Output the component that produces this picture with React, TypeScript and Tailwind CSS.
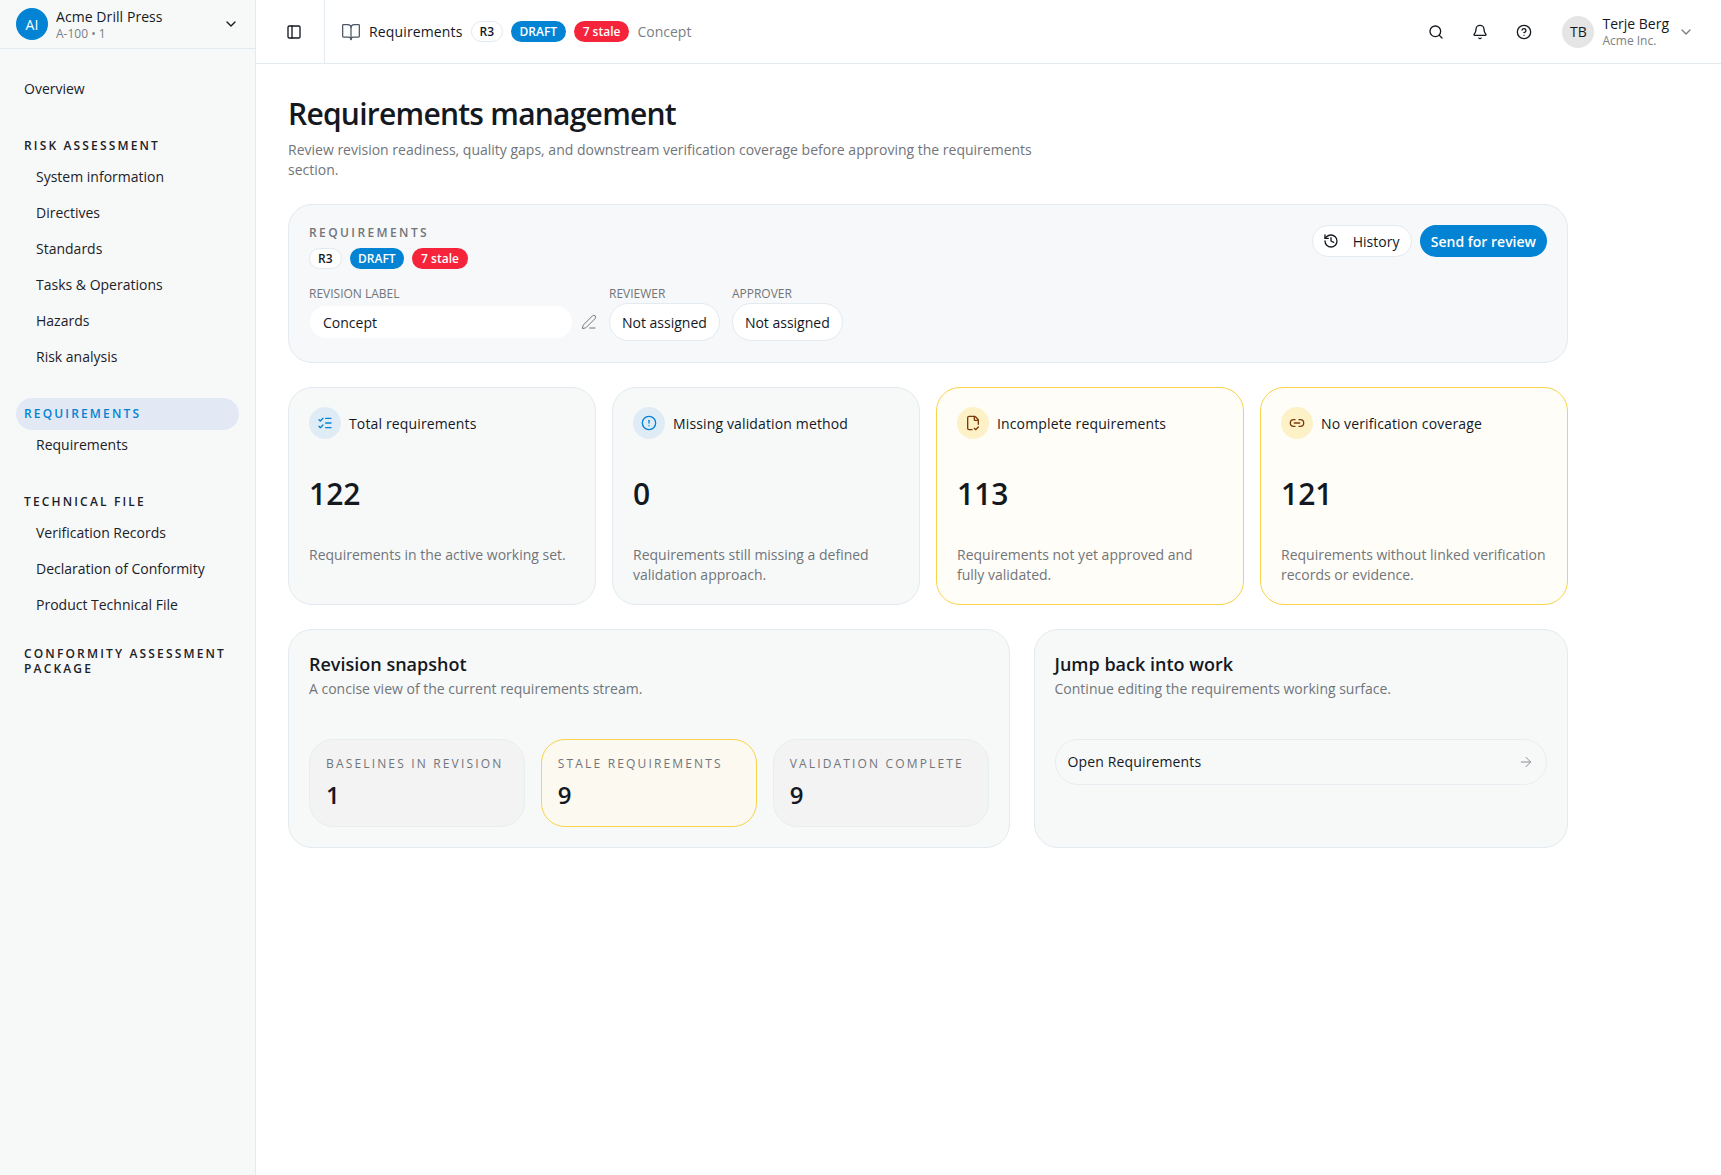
import React from 'react';
import {
  ArrowRight,
  Bell,
  BookOpen,
  ChevronDown,
  CircleAlert,
  CircleHelp,
  FileCheck2,
  History,
  Link2,
  ListChecks,
  PanelLeft,
  PenLine,
  Search,
} from 'lucide-react';

const navHeading = 'px-2 text-[12px] leading-[15px] font-semibold tracking-[0.18em] text-[#1c2128] uppercase';

const Badges = () => (
  <div className="flex items-center gap-2">
    <span className="flex h-[21px] items-center rounded-full border border-[#e2e8f0] bg-white px-2 text-[12px] font-semibold text-[#14181f]">R3</span>
    <span className="flex h-[21px] items-center rounded-full bg-[#0283d4] px-[8.5px] text-[12px] font-semibold text-white">DRAFT</span>
    <span className="flex h-[21px] items-center rounded-full bg-[#f6243a] px-[9px] text-[12px] font-semibold text-white">7 stale</span>
  </div>
);

const stats = [
  { title: 'Total requirements', value: '122', desc: 'Requirements in the active working set.', Icon: ListChecks, warn: false },
  { title: 'Missing validation method', value: '0', desc: 'Requirements still missing a defined validation approach.', Icon: CircleAlert, warn: false },
  { title: 'Incomplete requirements', value: '113', desc: 'Requirements not yet approved and fully validated.', Icon: FileCheck2, warn: true },
  { title: 'No verification coverage', value: '121', desc: 'Requirements without linked verification records or evidence.', Icon: Link2, warn: true },
];

const snapshot = [
  { label: 'Baselines in revision', value: '1', warn: false },
  { label: 'Stale requirements', value: '9', warn: true },
  { label: 'Validation complete', value: '9', warn: false },
];

export default function App() {
  return (
    <div className="flex min-h-[1175px] bg-white font-['Open_Sans',sans-serif] text-[#14181f]">
      {/* Sidebar */}
      <aside className="w-[256px] shrink-0 border-r border-[#e3eaf0] bg-[#f7f9f9]">
        <div className="flex h-[49px] items-center border-b border-[#e3eaf0] pr-[16px] pl-4">
          <div className="flex size-8 items-center justify-center rounded-full bg-[#0283d4] text-[14px] text-white">AI</div>
          <div className="ml-2 flex-1 pt-[2px]">
            <div className="text-[14px] leading-[18px] font-medium tracking-[0.005em]">Acme Drill Press</div>
            <div className="text-[12px] leading-[16px] text-[#7a7f85]">A-100 • 1</div>
          </div>
          <ChevronDown size={16} strokeWidth={2} />
        </div>
        <div className="px-4 pt-[21px]">
          <div className="flex h-9 items-center pl-2 text-[14px] text-[#1c2128]">Overview</div>
          <div className={navHeading + ' mt-[32px]'}>Risk assessment</div>
          <div className="mt-[5px]">
            {['System information', 'Directives', 'Standards', 'Tasks & Operations', 'Hazards', 'Risk analysis'].map((t) => (
              <div key={t} className="flex h-9 items-center pl-5 text-[14px] text-[#1c2128]">{t}</div>
            ))}
          </div>
          <div className="mt-[24px] flex h-8 items-center rounded-full bg-[#e2e9f5] px-2 text-[12px] font-semibold tracking-[0.18em] text-[#0283d4] uppercase">Requirements</div>
          <div className="-mt-[4px] flex h-9 items-center pl-5 text-[14px] text-[#1c2128]">Requirements</div>
          <div className={navHeading + ' mt-[32px]'}>Technical file</div>
          <div className="mt-[5px]">
            {['Verification Records', 'Declaration of Conformity', 'Product Technical File'].map((t) => (
              <div key={t} className="flex h-9 items-center pl-5 text-[14px] text-[#1c2128]">{t}</div>
            ))}
          </div>
          <div className={navHeading + ' mt-[24px]'}>Conformity assessment package</div>
        </div>
      </aside>

      <div className="min-w-0 flex-1">
        {/* Top bar */}
        <header className="flex h-[64px] items-center border-b border-[#e3eaf0] pr-[27px]">
          <div className="flex h-full w-[69px] items-center border-r border-[#e3eaf0] pl-[30px]">
            <PanelLeft size={16} strokeWidth={2} />
          </div>
          <BookOpen size={20} strokeWidth={1.5} className="ml-[16px] text-[#4b5563]" />
          <span className="ml-2 text-[14px] font-medium tracking-[0.01em]">Requirements</span>
          <div className="ml-2">
            <Badges />
          </div>
          <span className="ml-2 text-[14px] text-[#7a7f85]">Concept</span>
          <div className="flex-1" />
          <Search size={16} strokeWidth={2} />
          <Bell size={16} strokeWidth={2} className="ml-[28px]" />
          <CircleHelp size={16} strokeWidth={2} className="ml-[28px]" />
          <div className="ml-[30px] flex size-8 items-center justify-center rounded-full bg-[#e5e5e5] text-[14px] font-medium">TB</div>
          <div className="ml-2">
            <div className="text-[14px] leading-[18px] font-medium">Terje Berg</div>
            <div className="text-[12px] leading-[16px] text-[#7a7f85]">Acme Inc.</div>
          </div>
          <ChevronDown size={16} strokeWidth={2} className="ml-[9px] text-[#7a7f85]" />
        </header>

        {/* Main */}
        <main className="w-[1344px] px-8 pt-[30px]">
          <h1 className="text-[30px] leading-[40px] font-semibold tracking-[-0.025em]">Requirements management</h1>
          <p className="mt-[6px] w-[768px] text-[14px] leading-[20px] text-[#71757a]">
            Review revision readiness, quality gaps, and downstream verification coverage before approving the requirements section.
          </p>

          <section className="mt-[24px] flex h-[159px] items-start justify-between rounded-[24px] border border-[#e3eaf0] bg-[#f7f8f9] px-5 pt-[20px]">
            <div>
              <div className="text-[12px] leading-[16px] font-semibold tracking-[0.2em] text-[#71757a] uppercase">Requirements</div>
              <div className="mt-[7px]">
                <Badges />
              </div>
              <div className="mt-[17px] flex gap-3">
                <div>
                  <div className="text-[12px] leading-[16px] font-medium text-[#71757a] uppercase">Revision label</div>
                  <div className="mt-[1px] flex h-[38px] items-center">
                    <div className="ml-[1px] flex h-8 w-[262px] items-center rounded-full bg-white pl-[13px] text-[14px]">Concept</div>
                    <PenLine size={16} strokeWidth={1.5} className="ml-[9px] text-[#71757a]" />
                  </div>
                </div>
                <div>
                  <div className="text-[12px] leading-[16px] font-medium text-[#71757a] uppercase">Reviewer</div>
                  <div className="mt-[1px] flex h-[38px] items-center rounded-full border border-[#e3eaf0] bg-white px-3 text-[14px]">Not assigned</div>
                </div>
                <div>
                  <div className="text-[12px] leading-[16px] font-medium text-[#71757a] uppercase">Approver</div>
                  <div className="mt-[1px] flex h-[38px] items-center rounded-full border border-[#e3eaf0] bg-white px-3 text-[14px]">Not assigned</div>
                </div>
              </div>
            </div>
            <div className="flex gap-2">
              <button className="flex h-8 w-[100px] items-center rounded-full border border-[#e3eaf0] bg-white pl-[10px] text-[14px] font-medium">
                <History size={16} strokeWidth={2} />
                <span className="ml-[14px]">History</span>
              </button>
              <button className="flex h-8 items-center rounded-full bg-[#0283d4] px-[11px] text-[14px] font-semibold text-white">Send for review</button>
            </div>
          </section>

          <section className="mt-[24px] grid grid-cols-4 gap-4">
            {stats.map(({ title, value, desc, Icon, warn }) => (
              <div
                key={title}
                className={
                  warn
                    ? 'h-[218px] rounded-[24px] border border-[#f9d34c] bg-[#fffdf7] px-5 pt-[19px]'
                    : 'h-[218px] rounded-[24px] border border-[#e3eaf0] bg-[#f7f9f9] px-5 pt-[19px]'
                }
              >
                <div className="flex items-center gap-2">
                  <div className={warn ? 'flex size-8 items-center justify-center rounded-full bg-[#fdf1c7] text-[#7c3a0a]' : 'flex size-8 items-center justify-center rounded-full bg-[#e0ecf5] text-[#0283d4]'}>
                    <Icon size={16} strokeWidth={2} />
                  </div>
                  <span className="text-[14px] font-medium tracking-[0.01em]">{title}</span>
                </div>
                <div className="mt-[35px] text-[30px] leading-[40px] font-semibold">{value}</div>
                <p className="mt-[31px] text-[14px] leading-[20px] text-[#71757a]">{desc}</p>
              </div>
            ))}
          </section>

          <section className="mt-[24px] grid grid-cols-[1.35fr_1fr] gap-6">
            <div className="h-[219px] rounded-[24px] border border-[#e3eaf0] bg-[#f7f9f9] px-5 pt-[20px]">
              <h2 className="text-[18px] leading-[28px] font-semibold">Revision snapshot</h2>
              <p className="mt-[1px] text-[14px] leading-[20px] text-[#71757a]">A concise view of the current requirements stream.</p>
              <div className="mt-[40px] grid grid-cols-3 gap-4">
                {snapshot.map(({ label, value, warn }) => (
                  <div
                    key={label}
                    className={
                      warn
                        ? 'h-[88px] rounded-[24px] border border-[#f9d34c] bg-[#fcf9f1] px-4 pt-[16px]'
                        : 'h-[88px] rounded-[24px] border border-[#e8edf1] bg-[#f3f3f4] px-4 pt-[16px]'
                    }
                  >
                    <div className="text-[12px] leading-[16px] tracking-[0.18em] text-[#71757a] uppercase">{label}</div>
                    <div className="mt-[7px] text-[24px] leading-[32px] font-semibold">{value}</div>
                  </div>
                ))}
              </div>
            </div>
            <div className="h-[219px] rounded-[24px] border border-[#e3eaf0] bg-[#f7f9f9] px-5 pt-[20px]">
              <h2 className="text-[18px] leading-[28px] font-semibold">Jump back into work</h2>
              <p className="mt-[1px] text-[14px] leading-[20px] text-[#71757a]">Continue editing the requirements working surface.</p>
              <div className="mt-[40px] flex h-[46px] items-center justify-between rounded-full border border-[#e8edf1] bg-[#f7f9f9] px-3 pb-[1px] text-[14px] font-medium tracking-[0.01em]">
                Open Requirements
                <ArrowRight size={16} strokeWidth={1.5} className="text-[#8a8f95]" />
              </div>
            </div>
          </section>
        </main>
      </div>
    </div>
  );
}
